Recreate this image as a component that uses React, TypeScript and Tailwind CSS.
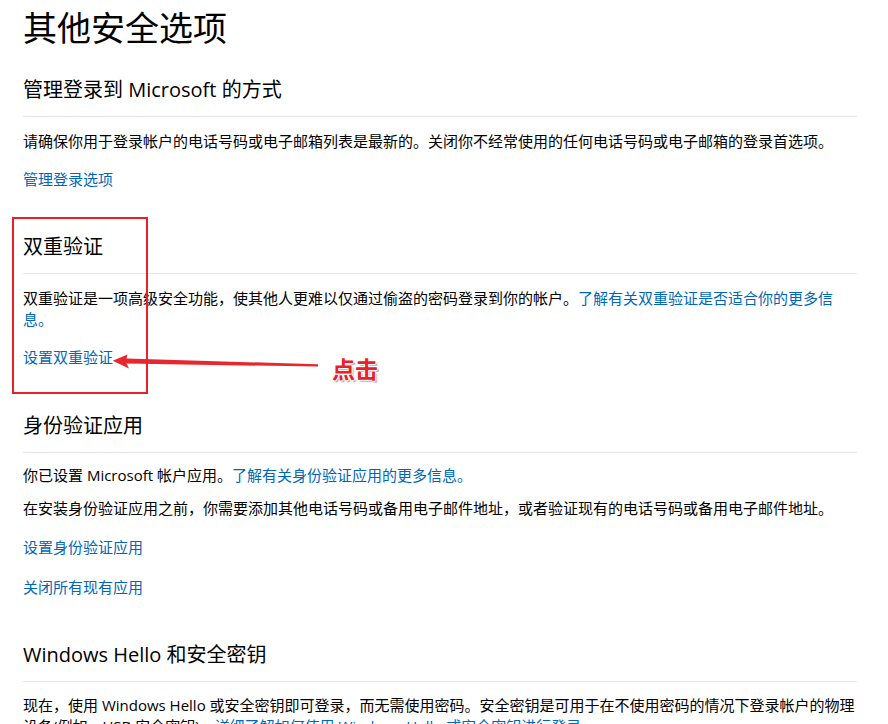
// ============================================================
// Other security options — Microsoft account settings page
// ============================================================

const FONT = "font-['Segoe_UI','Open_Sans','Noto_Sans_CJK_SC',sans-serif]";

function Heading({ children, className = '' }: { children: React.ReactNode; className?: string }) {
  return (
    <h2 className={`text-[20px] leading-[28px] text-black pb-[12px] border-b border-[#e5e5e5] ${className}`}>
      {children}
    </h2>
  );
}

function Link({ children }: { children: React.ReactNode }) {
  return <a className="text-[#0067b8] cursor-pointer">{children}</a>;
}

export default function App() {
  return (
    <div className={`relative min-h-screen bg-white overflow-hidden ${FONT}`}>
      <div className="ml-[23px] w-[834px] pt-[6px] pb-10 text-[15px] leading-[21px] text-black">
        <h1 className="text-[34px] leading-[44px] font-normal">其他安全选项</h1>

        {/* ═══ Manage sign-in ═══ */}
        <Heading className="mt-[26px]">管理登录到 Microsoft 的方式</Heading>
        <p className="mt-[14px]">
          请确保你用于登录帐户的电话号码或电子邮箱列表是最新的。关闭你不经常使用的任何电话号码或电子邮箱的登录首选项。
        </p>
        <p className="mt-[17px]">
          <Link>管理登录选项</Link>
        </p>

        {/* ═══ Two-step verification ═══ */}
        <Heading className="mt-[43px]">双重验证</Heading>
        <p className="mt-[14px]">
          双重验证是一项高级安全功能，使其他人更难以仅通过偷盗的密码登录到你的帐户。
          <Link>了解有关双重验证是否适合你的更多信息。</Link>
        </p>
        <p className="mt-[17px]">
          <Link>设置双重验证</Link>
        </p>

        {/* ═══ Authenticator app ═══ */}
        <Heading className="mt-[44px]">身份验证应用</Heading>
        <p className="mt-[12px]">
          你已设置 Microsoft 帐户应用。<Link>了解有关身份验证应用的更多信息。</Link>
        </p>
        <p className="mt-[12px]">
          在安装身份验证应用之前，你需要添加其他电话号码或备用电子邮件地址，或者验证现有的电话号码或备用电子邮件地址。
        </p>
        <p className="mt-[18px]">
          <Link>设置身份验证应用</Link>
        </p>
        <p className="mt-[19px]">
          <Link>关闭所有现有应用</Link>
        </p>

        {/* ═══ Windows Hello ═══ */}
        <Heading className="mt-[43px]">Windows Hello 和安全密钥</Heading>
        <p className="mt-[13px]">
          现在，使用 Windows Hello 或安全密钥即可登录，而无需使用密码。安全密钥是可用于在不使用密码的情况下登录帐户的物理设备(例如，USB 安全密钥)。
          <Link>详细了解如何使用 Windows Hello 或安全密钥进行登录。</Link>
        </p>
      </div>

      {/* ═══ Annotation overlay ═══ */}
      <div className="absolute left-[12px] top-[217px] w-[136px] h-[177px] border-2 border-[#e8202a]" />
      <svg
        className="absolute left-[100px] top-[340px]"
        width="230"
        height="40"
        viewBox="100 340 230 40"
      >
        <polygon
          points="112.7,360.7 127.5,354.5 126.5,358.6 318,364.2 318,366.6 126.5,363.6 129,368.6"
          fill="#e8262d"
        />
      </svg>
      <span className="absolute left-[332px] top-[354px] text-[23px] leading-[30px] font-bold text-[#e8202a] [text-shadow:1px_0_0_#fff,-1px_0_0_#fff,0_1px_0_#fff,0_-1px_0_#fff,2px_2px_1px_#b5b5b5]">
        点击
      </span>
    </div>
  );
}
